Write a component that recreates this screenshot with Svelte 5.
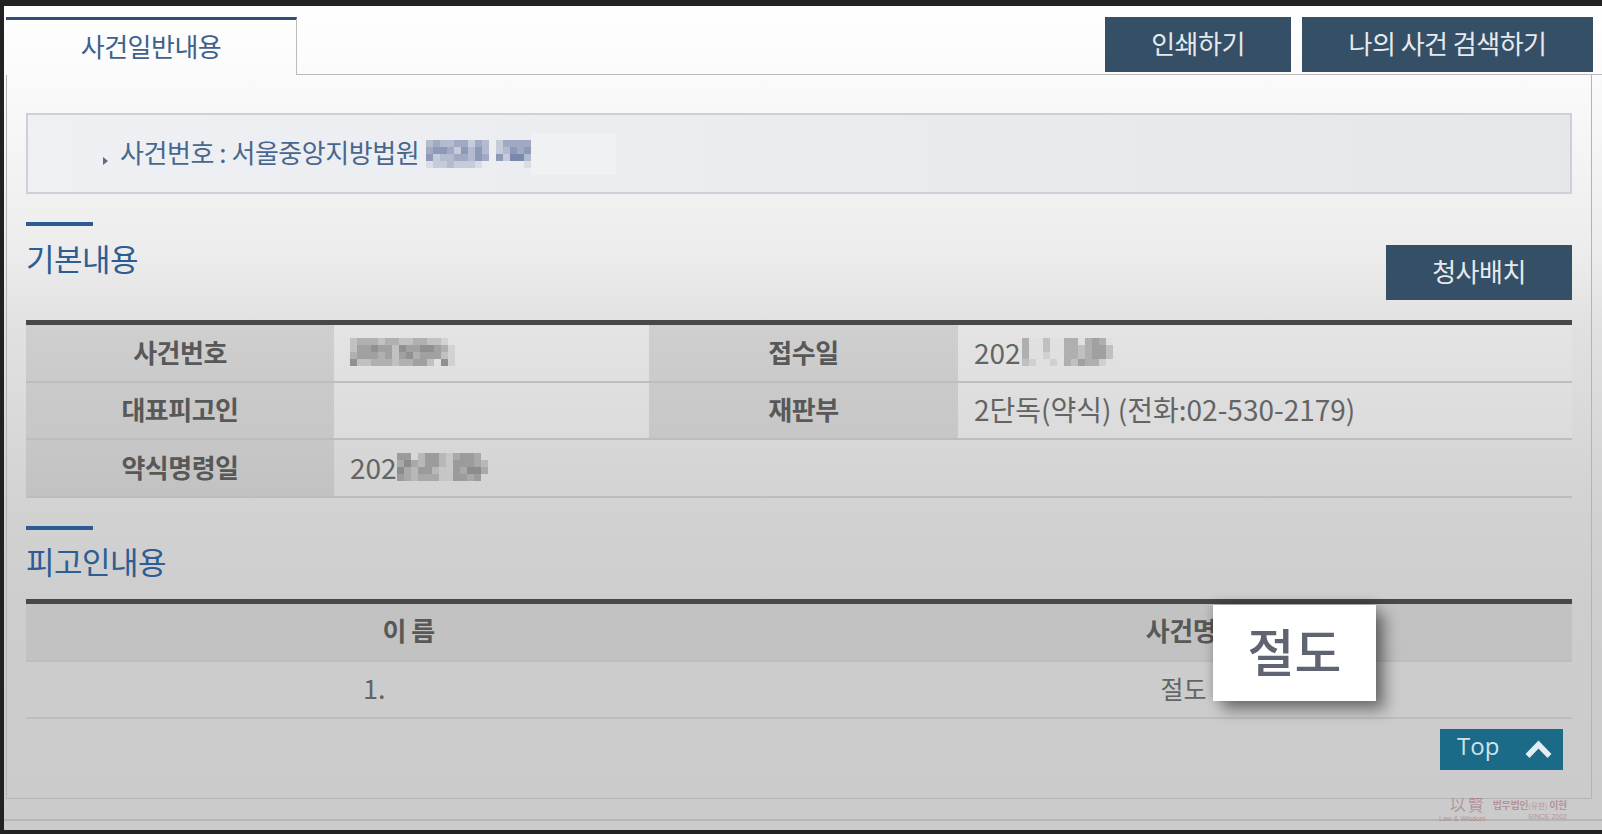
<script>
    // blurred-out case numbers: each digit is the darkness of one mosaic cell
    const caseNoInfo = ['343344243024444', '455425353023545', '523344354052663', '122322210000001']
    const caseNoRow = ['233323322332210', '244544254455431', '344434245344421', '522333233442051']
    const receiptDate = ['3002003303430', '3002003323442', '3001003323442', '2100103243310']
    const orderDate = ['4402442134430', '3532442144432', '5324421143553', '4323331144340']

    const basicRows = [
        [{ h: '사건번호' }, { mosaic: caseNoRow }, { h: '접수일' }, { text: '2021', mosaic: receiptDate, cls: 'over' }],
        [{ h: '대표피고인' }, {}, { h: '재판부' }, { text: '2단독(약식) (전화:02-530-2179)' }]
    ]
</script>

{#snippet mosaic(rows, cls)}
    <span class="mosaic {cls}">
        {#each rows as row}
            <span class="mosaic-row">
                {#each row.split('') as c}
                    <i style="opacity: {Number(c) / 7}"></i>
                {/each}
            </span>
        {/each}
    </span>
{/snippet}

<div class="page">
    <div class="tabs">
        <div class="tab">사건일반내용</div>
        <div class="tab-rest">
            <button class="btn print">인쇄하기</button>
            <button class="btn search">나의 사건 검색하기</button>
        </div>
    </div>

    <div class="panel">
        <div class="info">
            <span class="arrow"></span>
            <span class="info-text">사건번호 : 서울중앙지방법원</span>
            {@render mosaic(caseNoInfo, 'blue')}
            <span class="whiteout"></span>
        </div>

        <div class="section-head first">
            <h3>기본내용</h3>
            <button class="btn court">청사배치</button>
        </div>
        <table class="basic">
            <colgroup>
                <col style="width: 308px" />
                <col style="width: 315px" />
                <col style="width: 309px" />
                <col />
            </colgroup>
            <tbody>
                {#each basicRows as row}
                    <tr>
                        {#each row as cell}
                            {#if cell.h}
                                <th>{cell.h}</th>
                            {:else}
                                <td>
                                    <span class="cell-text">{cell.text ?? ''}</span>
                                    {#if cell.mosaic}{@render mosaic(cell.mosaic, cell.cls ?? '')}{/if}
                                </td>
                            {/if}
                        {/each}
                    </tr>
                {/each}
                <tr class="plain">
                    <th>약식명령일</th>
                    <td colspan="3">
                        <span class="cell-text">202</span>
                        {@render mosaic(orderDate, 'tight')}
                    </td>
                </tr>
            </tbody>
        </table>

        <div class="section-head">
            <h3>피고인내용</h3>
        </div>
        <table class="defendant">
            <thead>
                <tr>
                    <th class="name-col">이 름</th>
                    <th class="crime-col">사건명</th>
                </tr>
            </thead>
            <tbody>
                <tr>
                    <td class="name-cell">1.</td>
                    <td class="crime-cell">절도</td>
                </tr>
            </tbody>
        </table>

        <div class="top-row">
            <button class="top">
                <span>Top</span>
                <svg width="27" height="19" viewBox="0 0 27 19">
                    <path d="M2.5 16 L13.5 4.5 L24.5 16" fill="none" stroke="#e4eef2" stroke-width="5.5" />
                </svg>
            </button>
        </div>
    </div>

    <div class="footer"></div>

    <div class="popup">절도</div>

    <div class="watermark">
        <div class="wm-left">
            <span class="wm-han">以賢</span>
            <span class="wm-sub">Law &amp; Wisdom</span>
        </div>
        <div class="wm-right">
            <span class="wm-name">법무법인<small>(유한)</small> 이현</span>
            <span class="wm-sub">SINCE 2002</span>
        </div>
    </div>
</div>

<style>
    :global(body) {
        margin: 0;
        background: #222;
    }

    .page {
        position: relative;
        box-sizing: border-box;
        width: 1602px;
        height: 834px;
        overflow: hidden;
        border-top: 6px solid #222;
        border-left: 4px solid #222;
        border-bottom: 4px solid #222;
        padding-top: 11px;
        font-family: "Noto Sans CJK KR", "Noto Sans", sans-serif;
        background: linear-gradient(#fff 0, #f9f9f9 90px, #ececec 250px, #e1e1e1 320px, #d2d2d2 500px, #cdcdcd 610px, #cbcbcb 830px);
    }

    .tabs {
        display: flex;
        margin-left: 2px;
    }

    .tab {
        box-sizing: border-box;
        width: 291px;
        height: 58px;
        border-top: 3px solid #2b4f78;
        border-right: 1px solid #bcbcbc;
        text-align: center;
        padding-top: 8px;
        font-size: 26px;
        line-height: 36px;
        letter-spacing: -0.5px;
        color: #3d618c;
    }

    .tab-rest {
        flex: 1;
        height: 58px;
        box-sizing: border-box;
        border-bottom: 1px solid #bcbcbc;
        display: flex;
        justify-content: flex-end;
        align-items: flex-start;
        gap: 11px;
    }

    .btn {
        height: 55px;
        border: 0;
        padding: 0 0 5px;
        background: #344f66;
        color: #e6eaee;
        font-family: inherit;
        font-size: 26px;
        letter-spacing: -0.5px;
    }

    .print {
        width: 186px;
    }

    .search {
        width: 291px;
        margin-right: 9px;
    }

    .panel {
        box-sizing: border-box;
        margin-left: 2px;
        width: 1586px;
        height: 724px;
        padding: 38px 19px 0;
        border: 1px solid #b4b4b4;
        border-top: 0;
    }

    .info {
        box-sizing: border-box;
        height: 81px;
        display: flex;
        align-items: center;
        padding-left: 75px;
        border: 2px solid #cdd0d6;
        color: #48678f;
        font-size: 26px;
        letter-spacing: -0.45px;
        background: linear-gradient(90deg, #eef0f3, #e6e7ea);
    }

    .arrow {
        width: 0;
        height: 0;
        border-left: 5px solid #5a6c80;
        border-top: 4px solid transparent;
        border-bottom: 4px solid transparent;
        margin: 15px 12px 0 0;
    }

    .whiteout {
        width: 85px;
        height: 42px;
        background: #f0f1f3;
    }

    .info-text {
        margin-right: 7px;
        margin-top: -4px;
    }

    .mosaic {
        display: inline-flex;
        flex-direction: column;
        vertical-align: middle;
        filter: blur(0.5px);
    }

    .mosaic.over {
        margin-left: -20px;
        background: #e0e0e0;
    }

    .mosaic.tight {
        margin-left: -5px;
    }

    .mosaic-row {
        display: flex;
    }

    .mosaic i {
        display: block;
        width: 7px;
        height: 7px;
        background: #6f6f6f;
    }

    .blue i {
        background: #6877a0;
    }

    .section-head {
        display: flex;
        justify-content: space-between;
        align-items: flex-start;
        box-sizing: border-box;
        margin-top: 28px;
        height: 73px;
    }

    .section-head.first {
        margin-top: 28px;
        height: 98px;
    }

    h3 {
        margin: 0;
        padding-top: 4px;
        width: 67px;
        white-space: nowrap;
        border-top: 4px solid #2b5c94;
        font-size: 31px;
        line-height: 54px;
        font-weight: 400;
        letter-spacing: -0.5px;
        color: #2d5d93;
    }

    .section-head.first h3 {
        padding-top: 5px;
    }

    .court {
        width: 186px;
        margin-top: 23px;
    }

    table {
        width: 100%;
        border-collapse: collapse;
        table-layout: fixed;
        border-top: 5px solid #484848;
    }

    tr {
        border-bottom: 2px solid #bdbdbd;
    }

    th,
    td {
        padding: 0 0 4px;
        height: 51px;
        font-size: 25px;
        color: #646464;
    }

    th {
        font-weight: 700;
        font-size: 26px;
        letter-spacing: -0.5px;
        color: #585858;
        background: rgba(0, 0, 0, 0.08);
    }

    .basic td {
        padding-left: 16px;
        background: rgba(255, 255, 255, 0.1);
    }

    .basic tr:first-child th,
    .basic tr:first-child td {
        height: 52px;
    }

    .basic .plain td {
        background: none;
    }

    .basic .plain th,
    .basic .plain td {
        height: 52px;
    }

    td span {
        vertical-align: middle;
    }

    .cell-text {
        font-size: 28px;
    }

    .defendant th {
        height: 50px;
        padding-bottom: 6px;
        background: rgba(0, 0, 0, 0.05);
    }

    .name-col {
        padding-right: 8px;
    }

    .defendant .crime-col {
        padding-right: 9px;
    }

    .name-cell {
        padding-left: 337px;
        font-size: 27px;
    }

    .crime-cell {
        text-align: center;
        padding-right: 4px;
    }

    .top-row {
        display: flex;
        justify-content: flex-end;
        padding: 10px 9px 0 0;
    }

    .top {
        display: flex;
        align-items: center;
        justify-content: space-between;
        box-sizing: border-box;
        width: 123px;
        height: 41px;
        padding: 0 11px 0 17px;
        border: 0;
        background: #1a6a88;
        color: #cfe3ea;
        font-family: "Open Sans", sans-serif;
        font-size: 24px;
    }

    .top span {
        margin-top: -8px;
    }

    .footer {
        margin-top: 20px;
        border-top: 2px solid #b5b5b5;
    }

    .popup {
        position: absolute;
        left: 1209px;
        top: 599px;
        width: 163px;
        height: 90px;
        padding-bottom: 6px;
        display: flex;
        align-items: center;
        justify-content: center;
        background: #fff;
        color: #5f6570;
        font-size: 51px;
        font-weight: 500;
        box-shadow: 9px 9px 14px rgba(0, 0, 0, 0.42), 0 -2px 10px rgba(0, 0, 0, 0.22);
    }

    .watermark {
        position: absolute;
        left: 1435px;
        top: 790px;
        width: 128px;
        display: flex;
        justify-content: space-between;
        color: rgba(160, 90, 105, 0.5);
        line-height: 1;
    }

    .wm-left,
    .wm-right {
        display: flex;
        flex-direction: column;
        align-items: flex-end;
    }

    .wm-han {
        font-size: 16px;
        letter-spacing: 2px;
    }

    .wm-name {
        font-size: 10px;
        font-weight: 700;
        margin-top: 4px;
        letter-spacing: -0.3px;
    }

    .wm-name small {
        font-size: 8px;
        font-weight: 400;
    }

    .wm-sub {
        font-family: "Liberation Sans", sans-serif;
        font-size: 7px;
        margin-top: 3px;
    }
</style>
